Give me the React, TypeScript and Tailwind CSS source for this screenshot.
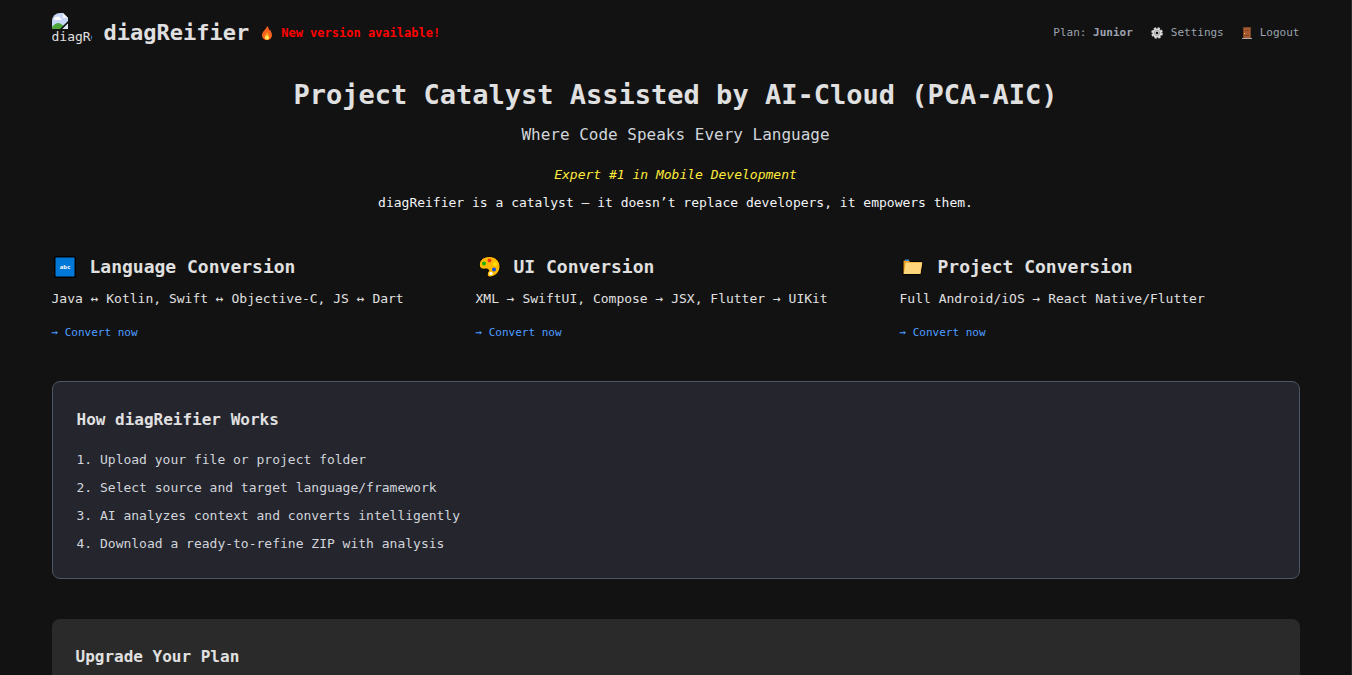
import type { ReactNode } from "react";

function BrokenImageIcon() {
  return (
    <svg viewBox="0 0 16 16" className="block h-4 w-4" aria-hidden="true">
      <path d="M0 5Q0 0 5 0H11L16 5V16H0Z" fill="#c5d6f7" />
      <path d="M11 0L16 5H11Z" fill="#f4f6fb" />
      <path d="M2 6Q3 3 5 4Q7 2 8 5Q10 5 9 7H3Q1 7 2 6Z" fill="#ffffff" />
      <path d="M0 16V14Q5 8 9 11L12 13L9 16Z" fill="#4ea63b" />
      <path d="M16 8V10.500L10.500 16H8Z" fill="#121212" />
      <path d="M16 10.500V16H10.500Z" fill="#dfe7f7" />
    </svg>
  );
}

function FireIcon() {
  return (
    <svg viewBox="0 0 12 14" className="h-[14px] w-3" aria-hidden="true">
      <path d="M6 0C6 3 1 5 1 9.2C1 12 3.2 14 6 14S11 12 11 9C11 6.600 9.500 5 9 3.500L8 4.500C8 2.500 7.300 1 6 0Z" fill="#f4601d" />
      <path d="M6 5.500C6 7.500 3.500 8.500 3.500 10.600C3.500 12.300 4.500 13.500 6 13.500S8.500 12.300 8.500 10.600C8.500 9 7 7.500 6 5.500Z" fill="#ff9a1f" />
      <path d="M6 9C5.500 10 4 10.500 4 12C4 13 5 13.600 6 13.600S8 13 8 12C8 10.500 6.500 10 6 9Z" fill="#ffe85c" />
    </svg>
  );
}

function GearIcon() {
  return (
    <svg viewBox="0 0 12 12" className="h-3 w-3" aria-hidden="true">
      <circle cx="6" cy="6" r="4.600" fill="#dcdcdc" />
      <circle cx="6" cy="6" r="5" fill="none" stroke="#dcdcdc" strokeWidth="1.600" strokeDasharray="2.400 1.527" />
      <circle cx="6" cy="6" r="2.600" fill="none" stroke="#a0a0a0" strokeWidth="1" />
      <circle cx="6" cy="6" r="1.300" fill="#121212" />
    </svg>
  );
}

function DoorIcon() {
  return (
    <svg viewBox="0 0 10 13" className="h-[13px] w-[10px]" aria-hidden="true">
      <rect x="1" y="0" width="8" height="12" fill="#7a4326" />
      <rect x="2" y="1" width="6" height="10" fill="#a55a30" />
      <path d="M3 3.500H7M3 8.500H7" stroke="#7f4527" strokeWidth="1" />
      <rect x="2" y="6" width="1" height="1" fill="#ffc83d" />
      <rect x="0" y="11" width="10" height="1" fill="#a8a8a8" />
    </svg>
  );
}

function AbcIcon() {
  return (
    <svg viewBox="0 0 26 24" className="h-6 w-[26px]" aria-hidden="true">
      <rect x="2" y="1" width="22" height="22" fill="#000000" />
      <rect x="3.500" y="2.500" width="19" height="19" fill="#0078d7" />
      <text x="13" y="14" textAnchor="middle" fontFamily="Open Sans, sans-serif" fontWeight="700" fontSize="6" fill="#ffffff">
        abc
      </text>
    </svg>
  );
}

function PaletteIcon() {
  return (
    <svg viewBox="0 0 26 24" className="h-6 w-[26px]" aria-hidden="true">
      <path
        d="M13.500 1.500C7.500 1.500 3.300 5 3.300 9.800C3.300 12.600 5 14.200 7.500 14.200C9.500 14.200 12 13.600 12.600 15C13.200 16.400 10.900 17.300 11.200 19.200C11.500 21.400 13 22.300 14.600 22C20 21.200 24 16.800 24 11.500C24 6 19.500 1.500 13.500 1.500Z"
        fill="#ffb900"
        stroke="#000000"
        strokeWidth="1"
      />
      <circle cx="13.500" cy="5.500" r="1.900" fill="#f03a17" />
      <circle cx="8" cy="8.500" r="2" fill="#16b013" />
      <circle cx="19" cy="9" r="1.900" fill="#ffe100" />
      <circle cx="18" cy="14.500" r="2" fill="#0a4fe0" />
      <circle cx="15" cy="18.500" r="1.700" fill="#ffffff" />
    </svg>
  );
}

function FolderIcon() {
  return (
    <svg viewBox="0 0 26 24" className="h-6 w-[26px]" aria-hidden="true">
      <path d="M3 5H8.500L10 6.500H21.500V7H22.800L20.800 19.500H3Z" fill="#e8a020" stroke="#000000" strokeWidth="1" />
      <rect x="5" y="4.500" width="4" height="1.500" fill="#3b8de0" />
      <path d="M5.800 7.500H22.300L20.300 19H3.800Z" fill="#ffd679" />
    </svg>
  );
}

type Feature = { icon: ReactNode; title: string; text: string };

const features: Feature[] = [
  { icon: <AbcIcon />, title: "Language Conversion", text: "Java ↔ Kotlin, Swift ↔ Objective-C, JS ↔ Dart" },
  { icon: <PaletteIcon />, title: "UI Conversion", text: "XML → SwiftUI, Compose → JSX, Flutter → UIKit" },
  { icon: <FolderIcon />, title: "Project Conversion", text: "Full Android/iOS → React Native/Flutter" },
];

const steps = [
  "Upload your file or project folder",
  "Select source and target language/framework",
  "AI analyzes context and converts intelligently",
  "Download a ready-to-refine ZIP with analysis",
];

export default function App() {
  return (
    <div className="h-screen overflow-hidden border-r border-[#2c2c2c] bg-[#121212] font-['DejaVu_Sans_Mono','Liberation_Mono',monospace] text-[13px] leading-5 text-[#e0e0e0]">
      <div className="mx-auto max-w-7xl px-4">
        <header className="flex items-center justify-between pt-[13px]">
          <div className="flex items-center">
            <div role="img" aria-label="diagReifier logo" className="h-10 w-10 overflow-hidden rounded-lg">
              <BrokenImageIcon />
              <span className="block w-10 overflow-hidden leading-4 whitespace-nowrap">diagRe</span>
            </div>
            <span className="ml-3 text-[22px] leading-8 font-bold">diagReifier</span>
            <span className="ml-3 flex items-center gap-2 text-[12px] leading-4 font-bold text-[#ff0000]">
              <FireIcon />
              New version available!
            </span>
          </div>
          <nav className="flex items-center gap-[18px] text-[11px] leading-4 text-[#9ca3af]">
            <span>
              Plan: <strong>Junior</strong>
            </span>
            <a href="#settings" className="flex items-center gap-2">
              <GearIcon />
              Settings
            </a>
            <a href="#logout" className="flex items-center gap-2">
              <DoorIcon />
              Logout
            </a>
          </nav>
        </header>

        <main>
          <section className="mt-6 text-center">
            <h1 className="text-[27px] leading-9 font-bold">Project Catalyst Assisted by AI-Cloud (PCA-AIC)</h1>
            <p className="mt-2 text-[16px] leading-7 text-[#d1d5db]">Where Code Speaks Every Language</p>
            <p className="mt-4 text-[#ffeb3b] italic">Expert #1 in Mobile Development</p>
            <p className="mt-2 text-[#f3f4f6]">diagReifier is a catalyst — it doesn’t replace developers, it empowers them.</p>
          </section>

          <section className="mt-10 grid grid-cols-3 gap-6">
            {features.map((f) => (
              <article key={f.title}>
                <h2 className="flex items-center gap-3 text-[18px] leading-7 font-bold">
                  {f.icon}
                  {f.title}
                </h2>
                <p className="mt-2 whitespace-nowrap">{f.text}</p>
                <a href="#convert" className="mt-4 inline-block text-[11px] leading-4 text-[#4f9dff]">
                  → Convert now
                </a>
              </article>
            ))}
          </section>

          <section className="mt-[39px] rounded-lg border border-[#4b5563] bg-[#25252e] p-6">
            <h2 className="text-[16px] leading-7 font-bold">How diagReifier Works</h2>
            <ol className="mt-4 space-y-2 text-[#d1d5db]">
              {steps.map((s, i) => (
                <li key={s}>
                  {i + 1}. {s}
                </li>
              ))}
            </ol>
          </section>

          <section className="mt-10 rounded-lg bg-[#2a2a2a] p-6">
            <h2 className="text-[16px] leading-7 font-bold">Upgrade Your Plan</h2>
          </section>
        </main>
      </div>
    </div>
  );
}
